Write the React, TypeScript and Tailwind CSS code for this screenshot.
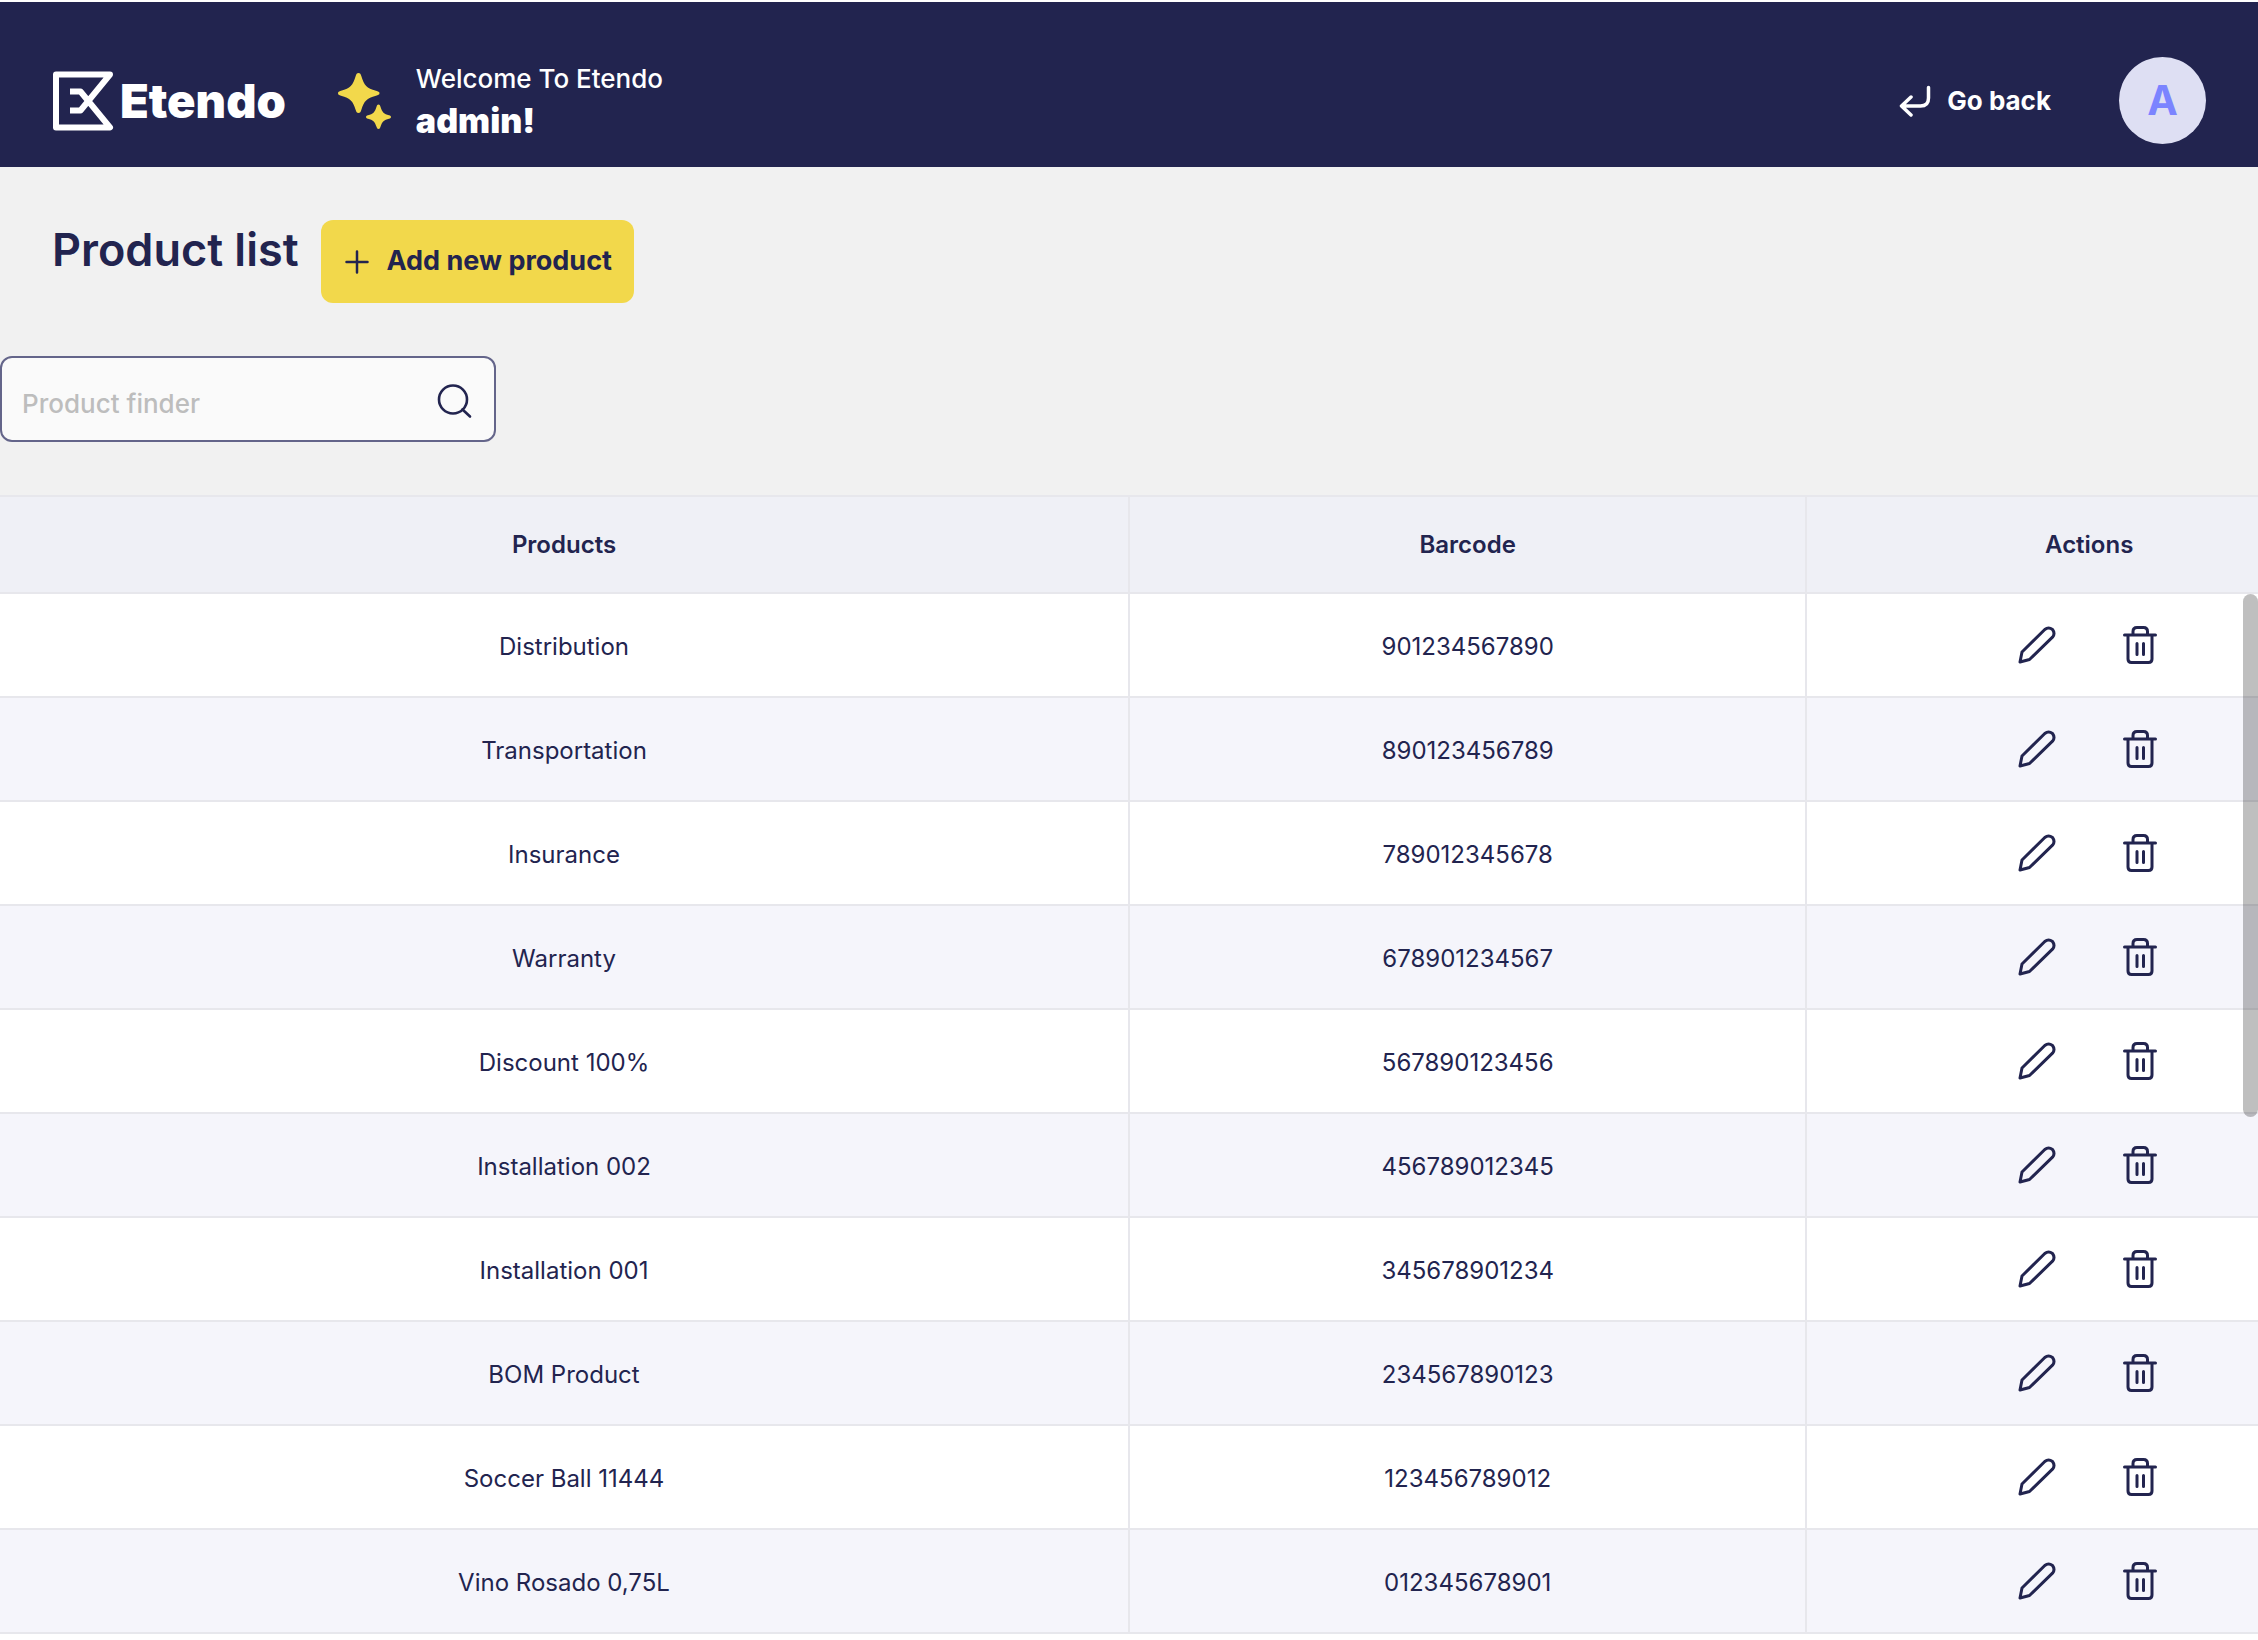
import React from "react";

const products = [
  ["Distribution", "901234567890"],
  ["Transportation", "890123456789"],
  ["Insurance", "789012345678"],
  ["Warranty", "678901234567"],
  ["Discount 100%", "567890123456"],
  ["Installation 002", "456789012345"],
  ["Installation 001", "345678901234"],
  ["BOM Product", "234567890123"],
  ["Soccer Ball 11444", "123456789012"],
  ["Vino Rosado 0,75L", "012345678901"],
];

function LogoMark() {
  return (
    <svg className="h-[62px] w-[62px] shrink-0" viewBox="0 0 62 62" fill="none" stroke="currentColor" strokeWidth="6" strokeLinejoin="round" aria-hidden="true">
      <path d="M18 21.500H28.500L58 57.500H4V4.500H58L28.500 40.500H18" />
    </svg>
  );
}

function Sparkles() {
  return (
    <svg className="h-[57px] w-[54px] shrink-0 text-[#f2d84b]" viewBox="0 0 54 57" fill="currentColor" aria-hidden="true">
      <path d="M20.500 1C22.200 1 22.700 2 23.300 4C26.300 13.800 28.500 16 38 18.700C40 19.300 41.500 19.800 41.500 21.200C41.500 22.600 40 23.100 38 23.700C28.500 26.500 26.300 28.500 23.300 38C22.700 40 22.200 41 20.500 41C18.800 41 18.300 40 17.700 38C14.700 28.500 12.500 26.500 3 23.700C1 23.100 0 22.600 0 21.200C0 19.800 1 19.300 3 18.700C12.500 16 14.700 13.800 17.700 4C18.300 2 18.800 1 20.500 1Z" />
      <path d="M40.500 32.500C41.600 32.500 42 33.300 42.400 34.500C44.200 40.500 46 42 51 43.200C52.500 43.600 53 44.200 53 45C53 45.800 52.500 46.400 51 46.800C46 48 44.200 49.700 42.400 55C42 56.300 41.600 57 40.500 57C39.400 57 39 56.300 38.600 55C36.800 49.700 35 48 30 46.800C28.500 46.400 28 45.800 28 45C28 44.200 28.500 43.600 30 43.200C35 42 36.800 40.500 38.600 34.500C39 33.300 39.400 32.500 40.500 32.500Z" />
    </svg>
  );
}

function ReturnIcon() {
  return (
    <svg className="h-8 w-8 shrink-0" viewBox="0 0 32 32" fill="none" stroke="currentColor" strokeWidth="3.500" strokeLinecap="round" strokeLinejoin="round" aria-hidden="true">
      <path d="M29.500 2.500V13Q29.500 21 21.500 21H2.500M12 12L2.500 21L12 30" />
    </svg>
  );
}

function PencilIcon() {
  return (
    <svg className="size-[38px]" viewBox="0 0 38 38" fill="none" stroke="currentColor" strokeWidth="3" strokeLinejoin="round" aria-hidden="true">
      <path d="M2 36L4 26L26.800 3.500Q30.500 0.500 34.500 3.500Q37.500 7.500 34.500 11.200L11.500 33.500Z" />
    </svg>
  );
}

function TrashIcon() {
  return (
    <svg className="h-[38px] w-[34px]" viewBox="0 0 34 38" fill="none" stroke="currentColor" strokeWidth="3" strokeLinecap="round" strokeLinejoin="round" aria-hidden="true">
      <path d="M1.500 9H32.500M5 9V33Q5 36.500 8.500 36.500H25.500Q29 36.500 29 33V9M10 8.500V5.500Q10 1.500 14 1.500H20.500Q24.500 1.500 24.500 5.500V8.500M14 17.500V28.500M20.500 17.500V28.500" />
    </svg>
  );
}

export default function App() {
  return (
    <div className="flex min-h-screen flex-col bg-[#f1f1f1] font-['Inter',sans-serif] text-[#22244f]">
      <header className="flex h-[167px] shrink-0 items-center justify-between border-t-2 border-white bg-[#22244f] px-[52px] pt-8 text-white">
        <div className="flex items-center">
          <div className="flex items-center gap-[6px]">
            <LogoMark />
            <span className="text-[47px] leading-[60px] font-black">Etendo</span>
          </div>
          <div className="ml-[52px] flex items-center gap-6">
            <Sparkles />
            <div>
              <p className="text-[26px] leading-[40px] font-medium">Welcome To Etendo</p>
              <p className="text-[34px] leading-[44px] font-black">admin!</p>
            </div>
          </div>
        </div>
        <div className="flex items-center gap-[68px]">
          <button type="button" className="flex items-center gap-4 text-[26px] leading-8 font-bold">
            <ReturnIcon />
            Go back
          </button>
          <div className="flex size-[87px] items-center justify-center rounded-full bg-[#dedff3] text-[41px] font-bold text-[#7b84ff]">A</div>
        </div>
      </header>

      <main className="flex flex-1 flex-col">
        <div className="flex items-start gap-[22px] px-[52px] pt-[53px]">
          <h1 className="text-[45px] leading-[60px] font-semibold">Product list</h1>
          <button type="button" className="flex h-[83px] items-center gap-4 rounded-xl bg-[#f2d84b] px-[22px] text-[27px] font-bold">
            <svg className="size-7" viewBox="0 0 28 28" stroke="currentColor" strokeWidth="2.500" strokeLinecap="round" aria-hidden="true">
              <path d="M14 3.500V24.500M3.500 14H24.500" />
            </svg>
            Add new product
          </button>
        </div>

        <label className="mt-[53px] flex h-[86px] w-[496px] items-center rounded-xl border-2 border-[#64658a] bg-[#fafafa] pr-[22px] pl-5">
          <input type="text" aria-label="Product finder" placeholder="Product finder" className="min-w-0 flex-1 pt-2 text-[26px] font-medium outline-none placeholder:text-[#bdbdbd]" />
          <svg className="mt-1 size-9" viewBox="0 0 36 36" fill="none" stroke="currentColor" strokeWidth="2.600" strokeLinecap="round" aria-hidden="true">
            <circle cx="17" cy="16.500" r="14" />
            <path d="M26.500 26.500L34 33.500" />
          </svg>
        </label>

        <div className="relative mt-[53px] flex-1 bg-white">
          <table className="w-full table-fixed border-collapse text-center text-[24px] leading-8">
            <thead>
              <tr className="h-[97px] border-y-2 border-[#e7e7ec] bg-[#eff0f6]">
                <th className="w-[50%] border-r-2 border-[#e7e7ec] font-semibold">Products</th>
                <th className="w-[30%] border-r-2 border-[#e7e7ec] font-semibold">Barcode</th>
                <th className="w-[20%] pl-[113px] font-semibold">Actions</th>
              </tr>
            </thead>
            <tbody>
              {products.map(([name, code]) => (
                <tr key={code} className="h-[104px] border-b-2 border-[#e7e7ec] even:bg-[#f5f5fb]">
                  <td className="border-r-2 border-[#e7e7ec] pt-1">{name}</td>
                  <td className="border-r-2 border-[#e7e7ec] pt-1">{code}</td>
                  <td className="pl-[109px]">
                    <div className="flex items-center justify-center gap-[67px]">
                      <button type="button" aria-label={`Edit ${name}`}><PencilIcon /></button>
                      <button type="button" aria-label={`Delete ${name}`}><TrashIcon /></button>
                    </div>
                  </td>
                </tr>
              ))}
            </tbody>
          </table>
          <div className="absolute top-[99px] right-0 h-[523px] w-[15px] rounded-full bg-black/25" />
        </div>
      </main>
    </div>
  );
}
